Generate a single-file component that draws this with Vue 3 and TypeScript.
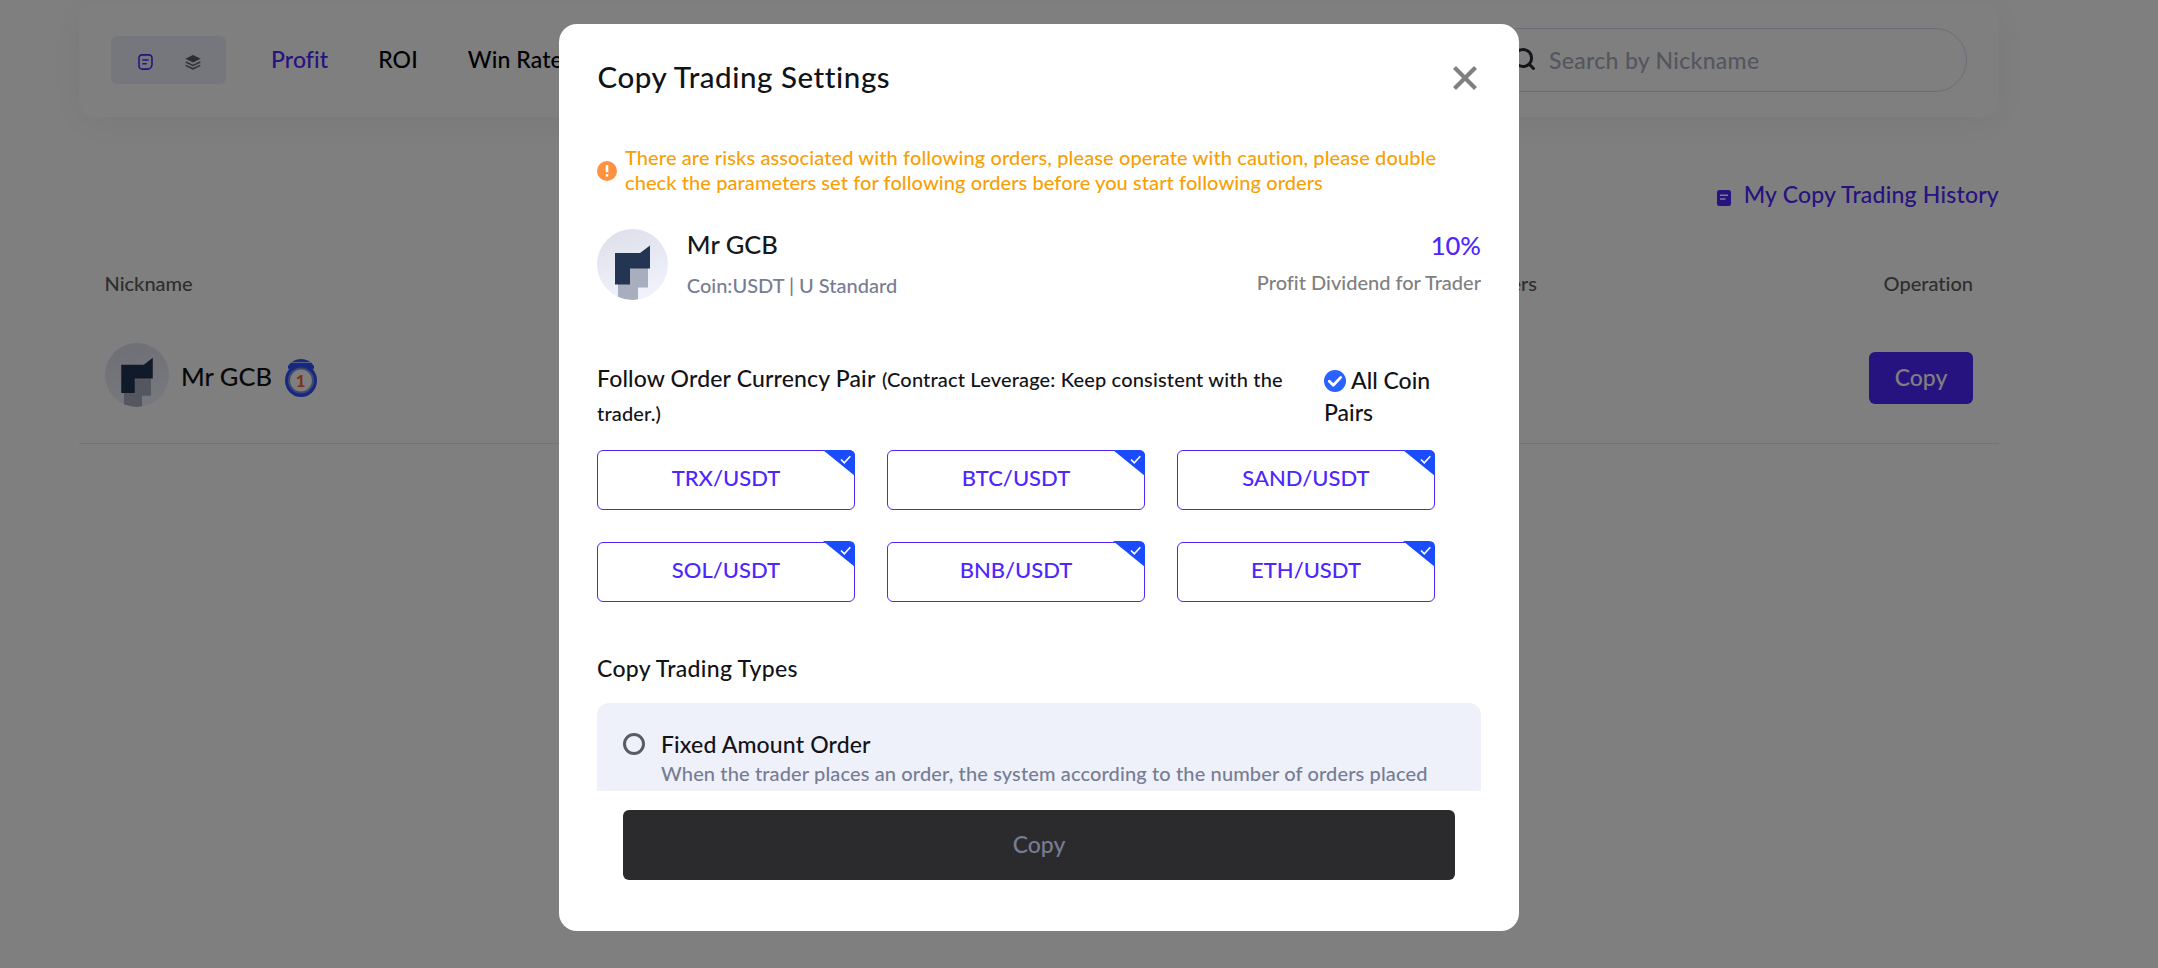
<script setup lang="ts">
import { ref } from 'vue'

const tabs = ['Profit', 'ROI', 'Win Rate']
const activeTab = ref('Profit')
const keyword = ref('')
const pairs = ref(['TRX/USDT', 'BTC/USDT', 'SAND/USDT', 'SOL/USDT', 'BNB/USDT', 'ETH/USDT'])
</script>

<template>
  <div class="page">
    <header class="bar">
      <div class="toggle">
        <svg class="doc-icon" width="15" height="16" viewBox="0 0 15 16">
          <path d="M4 .9h7a3 3 0 0 1 3 3v6.6q-.4 3.900-4 4.600H4a3 3 0 0 1-3-3V3.900a3 3 0 0 1 3-3z" />
          <path d="M4.300 6h6.200M4.300 9.800h4.400" />
        </svg>
        <svg width="16" height="15" viewBox="0 0 16 15">
          <path d="M8 0l7.600 3.700L8 7.400.4 3.700z" fill="#5a5866" />
          <path d="M.7 7L8 10.400 15.300 7M.7 10.400L8 13.800l7.300-3.400" fill="none" stroke="#66646f" stroke-width="1.500" />
        </svg>
      </div>
      <nav class="tabs">
        <a v-for="tab in tabs" :key="tab" :class="{ active: tab === activeTab }" @click="activeTab = tab">{{ tab }}</a>
      </nav>
      <label class="search">
        <svg width="24" height="24" viewBox="0 0 24 24">
          <circle cx="11" cy="11" r="8.600" />
          <path d="M17.300 17.300l4.200 4.200" />
        </svg>
        <input v-model="keyword" placeholder="Search by Nickname" />
      </label>
    </header>

    <div class="history">
      <svg width="14" height="16" viewBox="0 0 14 16">
        <rect width="14" height="16" rx="2.500" fill="#4d26ff" />
        <path d="M3 5.200h8M3 9h5.500" stroke="#fff" stroke-width="1.500" />
      </svg>
      <span>My Copy Trading History</span>
    </div>

    <div class="table-head">
      <span>Nickname</span>
      <span class="end">Followers</span>
      <span class="end">Operation</span>
    </div>
    <div class="row">
      <svg class="avatar-sm" viewBox="0 0 71 71">
        <defs>
          <linearGradient id="disc" x1="0" y1="0" x2="0.300" y2="1">
            <stop offset="0" stop-color="#dcdfe9" />
            <stop offset="1" stop-color="#eff1fb" />
          </linearGradient>
          <clipPath id="round"><circle cx="35.500" cy="35.500" r="35.500" /></clipPath>
        </defs>
        <g id="face" clip-path="url(#round)">
          <rect width="71" height="71" fill="url(#disc)" />
          <path d="M32 39h19v19.500H41V71H21V55h11z" fill="#a9aebf" />
          <path d="M18 24h25l10-7.500V39.500H33V55.500H18z" fill="#233552" />
        </g>
      </svg>
      <span class="name">Mr GCB</span>
      <svg class="medal" width="32" height="38" viewBox="0 0 32 38">
        <path d="M3 7Q8 0 16 0t13 7q.5 3-2.500 5h-21Q2.500 10 3 7z" fill="#2c50ff" />
        <path d="M5.500 3.500h21" stroke="#b8c4ff" stroke-width="1" />
        <ellipse cx="16" cy="21.500" rx="16" ry="16.500" fill="#2c50ff" />
        <circle cx="16" cy="21.500" r="12" fill="#fff" stroke="#8190dd" stroke-width="2.200" />
        <text x="15.700" y="27.900" text-anchor="middle">1</text>
      </svg>
      <button class="copy-sm">Copy</button>
    </div>
  </div>

  <div class="overlay">
    <section class="modal">
      <div class="title-row">
        <h2>Copy Trading Settings</h2>
        <svg width="24" height="24" viewBox="0 0 24 24">
          <path d="M1.500 1.500l21 21M22.500 1.500l-21 21" stroke="#808080" stroke-width="4.200" />
        </svg>
      </div>

      <div class="body">
        <div class="warning">
          <svg width="20" height="20" viewBox="0 0 20 20">
            <circle cx="10" cy="10" r="10" fill="#ff9240" />
            <path d="M10 4v7.200M10 13.300v2.200" stroke="#fff" stroke-width="2.600" />
          </svg>
          <p>
            There are risks associated with following orders, please operate with caution, please double<br />
            <span>check the parameters set for following orders before you start following orders</span>
          </p>
        </div>

        <div class="trader">
          <svg class="avatar" viewBox="0 0 71 71"><use href="#face" /></svg>
          <div class="who">
            <strong>Mr GCB</strong>
            <span>Coin:USDT | U Standard</span>
          </div>
          <div class="share">
            <strong>10%</strong>
            <span>Profit Dividend for Trader</span>
          </div>
        </div>

        <div class="pair-head">
          <p class="pair-title">
            Follow Order Currency Pair
            <span class="note">(Contract Leverage: Keep consistent with the</span><br />
            <span>trader.)</span>
          </p>
          <p class="all">
            <svg width="22" height="22" viewBox="0 0 22 22">
              <circle cx="11" cy="11" r="11" fill="#2962ff" />
              <path d="M5.300 11.300l4 4 7.400-7.900" fill="none" stroke="#fff" stroke-width="2.800" stroke-linecap="round" stroke-linejoin="round" />
            </svg>
            All Coin Pairs
          </p>
        </div>

        <div class="pairs">
          <div v-for="pair in pairs" :key="pair" class="pair">
            {{ pair }}
            <svg width="32" height="26" viewBox="0 0 32 26">
              <path d="M0 0h26q6 0 6 6v20z" fill="#1a4bff" />
              <path d="M18 9.500l3.300 3.300 6-6.500" fill="none" stroke="#fff" stroke-width="1.600" />
            </svg>
          </div>
        </div>

        <h3>Copy Trading Types</h3>
        <div class="type">
          <i class="radio"></i>
          <div>
            <h4>Fixed Amount Order</h4>
            <p>When the trader places an order, the system according to the number of orders placed</p>
          </div>
        </div>
      </div>

      <button class="submit" disabled>Copy</button>
    </section>
  </div>
</template>

<style>
body {
  background: #fff;
  overflow: hidden;
}
</style>

<style scoped>
.page,
.overlay {
  font-family: Lato, "Noto Sans", sans-serif;
  font-weight: 500;
  font-size: 23px;
  font-variant-ligatures: none;
  color: #121317;
}
.page *,
.overlay * {
  box-sizing: border-box;
}
h2,
h3,
h4,
p {
  margin: 0;
  font-weight: 500;
}
button,
input {
  font: inherit;
  border: 0;
}
svg {
  display: block;
  flex: none;
}
strong {
  font-weight: 500;
}
.page {
  box-sizing: border-box;
  width: 1999px;
  height: 968px;
  padding: 3px 0 0 79px;
}
.bar {
  display: flex;
  align-items: center;
  height: 114px;
  padding: 0 32px;
  border-radius: 16px;
  box-shadow: 0 6px 40px rgba(0, 0, 0, 0.06);
}
.toggle {
  display: flex;
  align-items: center;
  gap: 32px;
  width: 115px;
  height: 48px;
  padding: 4px 0 0 27px;
  border-radius: 6px;
  background: #eceffb;
}
.doc-icon path {
  fill: none;
  stroke: #4d26ff;
  stroke-width: 1.600;
}
.tabs {
  display: flex;
  gap: 50px;
  margin: -3px auto 0 45px;
  line-height: 30px;
  letter-spacing: 0.100px;
  white-space: nowrap;
  color: #000;
}
.tabs .active {
  color: #4d26ff;
}
.search {
  display: flex;
  align-items: center;
  gap: 13px;
  width: 480px;
  height: 64px;
  padding: 0 24px;
  border: 1px solid #dcd9f2;
  border-radius: 32px;
}
.search svg {
  margin-top: -2px;
  fill: none;
  stroke: #2a2a35;
  stroke-width: 3;
  stroke-linecap: round;
}
.search input {
  flex: 1;
  min-width: 0;
  padding: 0;
  background: none;
  letter-spacing: 0.300px;
}
.search input::placeholder {
  color: #a8adbd;
  opacity: 1;
}
.history {
  display: flex;
  justify-content: flex-end;
  align-items: center;
  gap: 13px;
  margin-top: 62px;
  line-height: 30px;
  letter-spacing: 0.210px;
  color: #4d26ff;
}
.history svg {
  margin-top: 7px;
}
.table-head {
  display: grid;
  grid-template-columns: 1fr 200px 436px;
  margin-top: 59px;
  padding: 0 26px 0 25.500px;
  font-size: 20px;
  line-height: 30px;
  color: #5c5c5c;
}
.end {
  text-align: right;
}
.row {
  display: flex;
  align-items: center;
  height: 145px;
  margin-top: 1px;
  padding: 10px 26px 0;
  border-bottom: 1px solid #e6e6e9;
}
.avatar-sm {
  width: 64px;
  height: 64px;
  margin-top: -2px;
}
.name {
  margin: 0 13px 0 12px;
  font-size: 25.500px;
}
.medal {
  margin-top: 4px;
}
.medal text {
  font: 700 17px Lato, sans-serif;
  fill: #ff5a28;
}
.copy-sm {
  width: 104px;
  height: 52px;
  margin: 4px 0 0 auto;
  padding: 0 0 2px;
  border-radius: 6px;
  background: #4d26ff;
  color: #fff;
}
.overlay {
  position: fixed;
  inset: 0;
  display: flex;
  align-items: flex-start;
  padding: 24.400px 0 0 559px;
  background: rgba(0, 0, 0, 0.5);
}
.modal {
  display: flex;
  flex-direction: column;
  width: 960px;
  height: 906.800px;
  padding: 0 38px;
  border-radius: 18px;
  background: #fff;
}
.title-row {
  display: flex;
  justify-content: space-between;
  align-items: center;
  height: 104px;
  padding: 0 4px 0 0;
}
.title-row svg {
  margin-top: 4px;
}
h2 {
  margin-left: 0.500px;
  font-size: 29.500px;
  letter-spacing: 0.560px;
}
.body {
  height: 662.600px;
  overflow: hidden;
}
.warning {
  display: flex;
  align-items: center;
  gap: 8px;
  margin-top: 16px;
  font-size: 20px;
  line-height: 25.300px;
  letter-spacing: 0.115px;
  white-space: nowrap;
  color: #f99f06;
}
.warning p {
  padding-top: 0.600px;
}
.warning span {
  letter-spacing: 0.085px;
}
.warning svg {
  margin-top: 3px;
}
.trader {
  display: flex;
  height: 71px;
  margin-top: 33px;
}
.avatar {
  width: 71px;
  height: 71px;
}
.who,
.share {
  display: flex;
  flex-direction: column;
  font-size: 20px;
  line-height: 30px;
}
.who {
  margin-left: 18.800px;
  gap: 11.500px;
  color: #767d93;
}
.who strong {
  font-size: 25.500px;
  color: #16181c;
}
.share {
  margin-left: auto;
  margin-top: 1px;
  gap: 7px;
  text-align: right;
  color: #808080;
}
.share strong {
  font-size: 25.600px;
  color: #4d26ff;
}
.pair-head {
  display: flex;
  justify-content: space-between;
  height: 89px;
  margin-top: 61px;
}
.pair-title {
  width: 700px;
  line-height: 34px;
  letter-spacing: 0.160px;
  white-space: nowrap;
}
.pair-title span {
  font-size: 20px;
  line-height: 20px;
}
.pair-title .note {
  margin-left: 1px;
}
.all {
  width: 157px;
  padding: 3px 30px 0 0;
  line-height: 32px;
}
.all svg {
  display: inline-block;
  vertical-align: -3px;
}
.pairs {
  display: grid;
  grid-template-columns: repeat(3, 258px);
  gap: 32px;
}
.pair {
  position: relative;
  height: 60px;
  border: 1px solid #4d26ff;
  border-radius: 6px;
  font-size: 22px;
  line-height: 54px;
  text-align: center;
  color: #4d26ff;
}
.pair svg {
  position: absolute;
  top: -1px;
  right: -1px;
}
.pair:nth-child(n + 4) svg {
  top: -2px;
}
h3 {
  margin-top: 51px;
  font-size: 23px;
  line-height: 30px;
  letter-spacing: 0.300px;
}
.type {
  display: flex;
  gap: 16px;
  height: 160px;
  margin-top: 20.500px;
  padding: 26px;
  border-radius: 12px;
  background: #eef0fa;
}
.radio {
  flex: none;
  width: 22px;
  height: 22px;
  margin-top: 4px;
  border: 3px solid #5b5967;
  border-radius: 50%;
}
h4 {
  font-size: 23px;
  line-height: 30px;
  letter-spacing: 0.150px;
}
.type p {
  margin-top: 1px;
  font-size: 20px;
  line-height: 26px;
  letter-spacing: 0.130px;
  white-space: nowrap;
  color: #767d93;
}
.submit {
  height: 70px;
  margin: 19.400px 26px 0;
  padding: 0 0 3px;
  border-radius: 6px;
  background: #2b2b2d;
  color: #777d93;
}
</style>
